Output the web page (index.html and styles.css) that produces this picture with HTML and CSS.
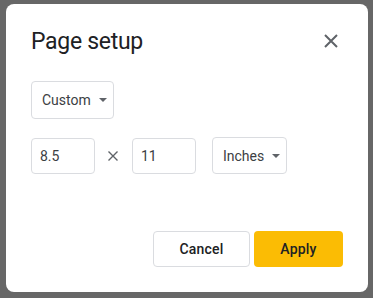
FILE: index.html
```html
<!DOCTYPE html>
<html lang="en">

<head>
  <meta charset="UTF-8">
  <meta name="viewport" content="width=device-width, initial-scale=1.0">
  <title>Page setup</title>
  <link rel="stylesheet" href="styles.css">
</head>

<body>
  <div class="dialog">
    <div class="dialog-header">
      <h1>Page setup</h1>
      <button class="close-btn" aria-label="Close">
        <svg width="14" height="14" viewBox="0 0 14 14">
          <path d="M1 1L13 13M13 1L1 13" stroke="#5f6368" stroke-width="2" fill="none" />
        </svg>
      </button>
    </div>

    <div class="select select-size">
      <span>Custom</span>
      <span class="caret"></span>
    </div>

    <div class="size-row">
      <input type="text" class="num-input" value="8.5" />
      <svg class="times" width="10" height="10" viewBox="0 0 10 10">
        <path d="M0.5 0.5L9.5 9.5M9.5 0.5L0.5 9.5" stroke="#5f6368" stroke-width="1.4" fill="none" />
      </svg>
      <input type="text" class="num-input" value="11" />
      <div class="select select-unit">
        <span>Inches</span>
        <span class="caret"></span>
      </div>
    </div>

    <div class="actions">
      <button class="btn cancel-btn">Cancel</button>
      <button class="btn apply-btn">Apply</button>
    </div>
  </div>
</body>

</html>
```

FILE: styles.css
```css
* {
  margin: 0;
  padding: 0;
  box-sizing: border-box;
}

body {
  font-family: Roboto, 'Liberation Sans', sans-serif;
  background: #676767;
  width: 373px;
  height: 298px;
  padding: 4px 5px 6px 6px;
}

.dialog {
  background: #ffffff;
  border-radius: 8px;
  height: 288px;
  padding: 22px 25px 25px 25px;
  display: flex;
  flex-direction: column;
}

.dialog-header {
  display: flex;
  justify-content: space-between;
  align-items: center;
  height: 32px;
}

.dialog-header h1 {
  font-size: 23px;
  font-weight: 400;
  line-height: 32px;
  color: #202124;
  letter-spacing: -0.3px;
}

.close-btn {
  background: none;
  border: none;
  width: 14px;
  height: 14px;
  margin-right: 5px;
  margin-top: -3px;
  display: flex;
}

.select {
  display: flex;
  align-items: center;
  border: 1px solid #dadce0;
  border-radius: 4px;
  font-size: 14px;
  color: #3c4043;
  padding-left: 10px;
}

.select-size {
  margin-top: 23px;
  width: 83px;
  height: 38px;
}

.select-unit {
  width: 75px;
  height: 37px;
  margin-left: 16px;
}

.caret {
  width: 0;
  height: 0;
  border-left: 4px solid transparent;
  border-right: 4px solid transparent;
  border-top: 4px solid #5f6368;
  margin-left: 8px;
}

.size-row {
  display: flex;
  align-items: center;
  margin-top: 18px;
}

.num-input {
  width: 64px;
  height: 36px;
  border: 1px solid #dadce0;
  border-radius: 4px;
  font-family: inherit;
  font-size: 14px;
  color: #3c4043;
  padding-left: 8px;
  outline: none;
}

.times {
  margin: 0 14px 0 13px;
}

.actions {
  display: flex;
  justify-content: flex-end;
  gap: 4px;
  margin-top: auto;
}

.btn {
  height: 36px;
  border-radius: 4px;
  font-family: inherit;
  font-size: 14px;
  font-weight: 500;
  color: #202124;
  letter-spacing: 0.2px;
}

.cancel-btn {
  width: 97px;
  background: #ffffff;
  border: 1px solid #dadce0;
}

.apply-btn {
  width: 89px;
  background: #fbbc04;
  border: none;
}
```
